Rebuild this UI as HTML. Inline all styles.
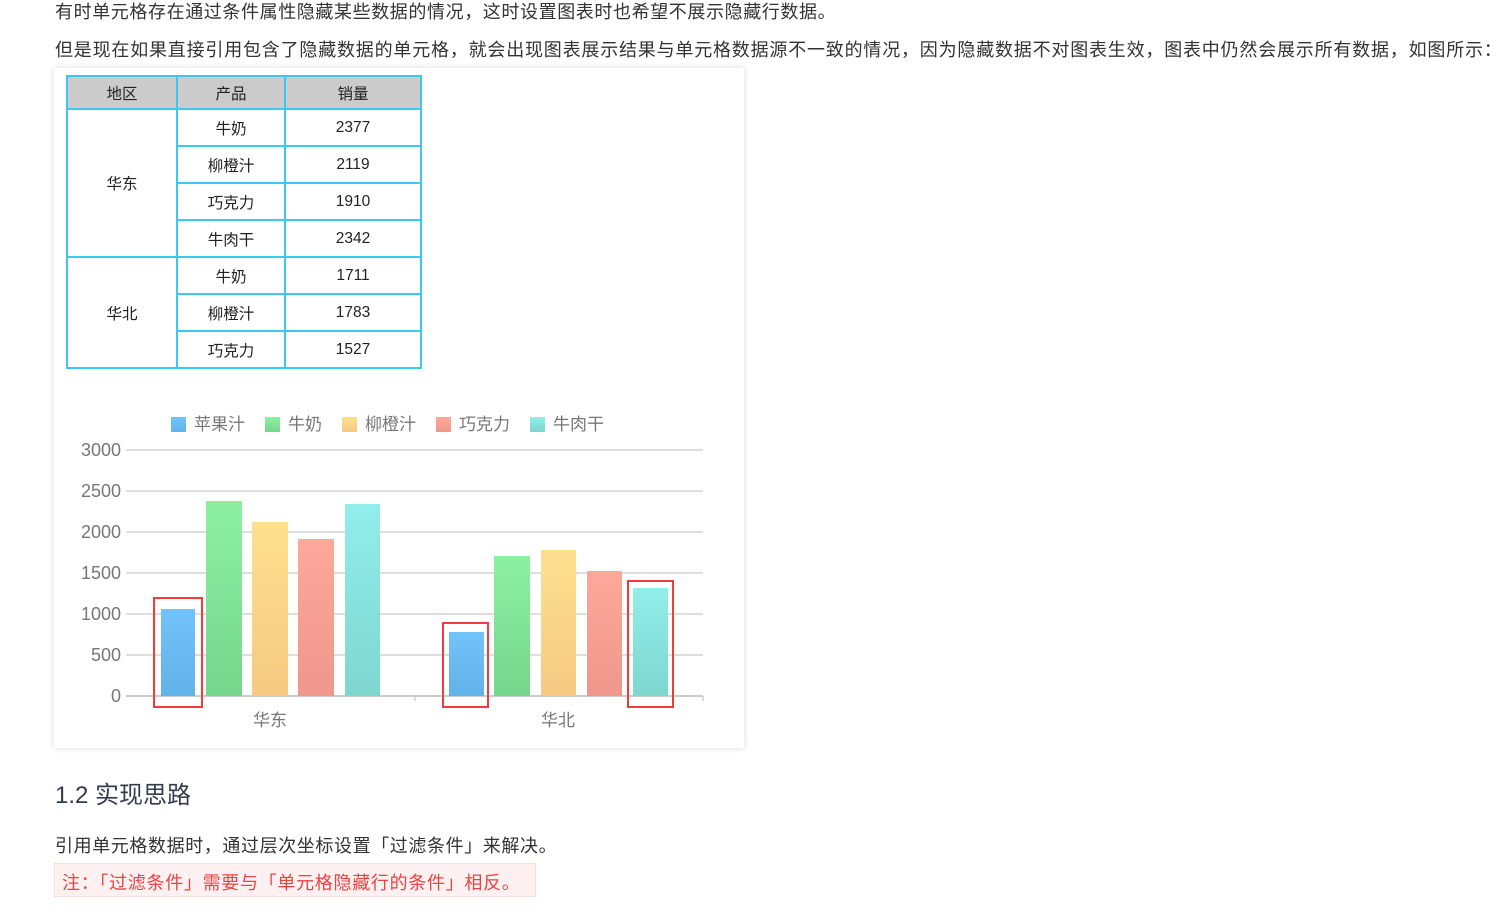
<!DOCTYPE html>
<html><head><meta charset="utf-8"><style>
body{margin:0;width:1512px;height:916px;background:#fff;font-family:"Liberation Sans","Noto Sans CJK SC",sans-serif;color:#333;position:relative;overflow:hidden}
.t{position:absolute;left:55px;font-size:18px;white-space:nowrap;color:#333}
.card{position:absolute;left:54px;top:68px;width:690px;height:680px;background:#fff;box-shadow:0 0 6px rgba(0,0,0,.15)}
table{position:absolute;left:12px;top:7px;border-collapse:collapse;font-size:15.5px;color:#222}
td,th{border:2px solid #3cc8f0;text-align:center;padding:0;font-weight:normal}
th{background:#cbcbcb;height:31px}
td{height:35px}
</style></head><body>
<div class="t" style="top:-2px;letter-spacing:0.6px">有时单元格存在通过条件属性隐藏某些数据的情况，这时设置图表时也希望不展示隐藏行数据。</div>
<div class="t" style="top:36px;letter-spacing:0.8px">但是现在如果直接引用包含了隐藏数据的单元格，就会出现图表展示结果与单元格数据源不一致的情况，因为隐藏数据不对图表生效，图表中仍然会展示所有数据，如图所示：</div>
<div class="card">
<table>
<tr><th style="width:108px">地区</th><th style="width:106px">产品</th><th style="width:134px">销量</th></tr>
<tr><td rowspan="4">华东</td><td>牛奶</td><td>2377</td></tr>
<tr><td>柳橙汁</td><td>2119</td></tr>
<tr><td>巧克力</td><td>1910</td></tr>
<tr><td>牛肉干</td><td>2342</td></tr>
<tr><td rowspan="3">华北</td><td>牛奶</td><td>1711</td></tr>
<tr><td>柳橙汁</td><td>1783</td></tr>
<tr><td>巧克力</td><td>1527</td></tr>
</table>
</div>
<svg style="position:absolute;left:0;top:0" width="1512" height="916" font-family="Liberation Sans, Noto Sans CJK SC, sans-serif">
<defs>
<linearGradient id="b" x1="0" y1="0" x2="0" y2="1"><stop offset="0" stop-color="#72c3fb"/><stop offset="1" stop-color="#62b2ea"/></linearGradient>
<linearGradient id="g" x1="0" y1="0" x2="0" y2="1"><stop offset="0" stop-color="#8cf0a2"/><stop offset="1" stop-color="#76d68c"/></linearGradient>
<linearGradient id="y" x1="0" y1="0" x2="0" y2="1"><stop offset="0" stop-color="#fde08f"/><stop offset="1" stop-color="#f6c982"/></linearGradient>
<linearGradient id="r" x1="0" y1="0" x2="0" y2="1"><stop offset="0" stop-color="#fca89a"/><stop offset="1" stop-color="#f0968b"/></linearGradient>
<linearGradient id="c" x1="0" y1="0" x2="0" y2="1"><stop offset="0" stop-color="#92eeea"/><stop offset="1" stop-color="#7ed6cf"/></linearGradient>
</defs>
<g font-size="17" fill="#777">
<rect x="171" y="417" width="15" height="15" fill="url(#b)"/><text x="194" y="430">苹果汁</text>
<rect x="265" y="417" width="15" height="15" fill="url(#g)"/><text x="288" y="430">牛奶</text>
<rect x="342" y="417" width="15" height="15" fill="url(#y)"/><text x="365" y="430">柳橙汁</text>
<rect x="436" y="417" width="15" height="15" fill="url(#r)"/><text x="459" y="430">巧克力</text>
<rect x="530" y="417" width="15" height="15" fill="url(#c)"/><text x="553" y="430">牛肉干</text>
</g>
<g stroke="#d4d4d4" stroke-width="1.5">
<line x1="126" y1="450" x2="703" y2="450"/><line x1="126" y1="491" x2="703" y2="491"/><line x1="126" y1="532" x2="703" y2="532"/><line x1="126" y1="573" x2="703" y2="573"/><line x1="126" y1="614" x2="703" y2="614"/><line x1="126" y1="655" x2="703" y2="655"/>
</g>
<line x1="126" y1="696" x2="703" y2="696" stroke="#bbb" stroke-width="1.5"/>
<line x1="415" y1="696" x2="415" y2="701" stroke="#bbb"/><line x1="703" y1="696" x2="703" y2="701" stroke="#bbb"/>
<g font-size="18" fill="#777" text-anchor="end">
<text x="121" y="456">3000</text><text x="121" y="497">2500</text><text x="121" y="538">2000</text><text x="121" y="579">1500</text><text x="121" y="620">1000</text><text x="121" y="661">500</text><text x="121" y="702">0</text>
</g>
<g font-size="17" fill="#777" text-anchor="middle"><text x="270" y="726">华东</text><text x="558" y="726">华北</text></g>
<rect x="161" y="609" width="34" height="87" fill="url(#b)"/>
<rect x="206" y="501" width="36" height="195" fill="url(#g)"/>
<rect x="252" y="522" width="36" height="174" fill="url(#y)"/>
<rect x="298" y="539" width="36" height="157" fill="url(#r)"/>
<rect x="345" y="504" width="35" height="192" fill="url(#c)"/>
<rect x="449" y="632" width="35" height="64" fill="url(#b)"/>
<rect x="494" y="556" width="36" height="140" fill="url(#g)"/>
<rect x="541" y="550" width="35" height="146" fill="url(#y)"/>
<rect x="587" y="571" width="35" height="125" fill="url(#r)"/>
<rect x="633" y="588" width="35" height="108" fill="url(#c)"/>
<g fill="none" stroke="#f03c3c" stroke-width="2">
<rect x="154" y="598" width="48" height="109"/>
<rect x="443" y="623" width="45" height="84"/>
<rect x="628" y="581" width="45" height="126"/>
</g>
</svg>
<div style="position:absolute;left:55px;top:775px;font-size:24px;color:#333d4d">1.2 实现思路</div>
<div class="t" style="top:832px;letter-spacing:0.6px">引用单元格数据时，通过层次坐标设置「过滤条件」来解决。</div>
<div style="position:absolute;left:54px;top:863px;width:480px;height:32px;background:#fff1f1;border:1px solid #fcdede"></div>
<div style="position:absolute;left:62px;top:869px;font-size:18px;color:#e84343;white-space:nowrap;letter-spacing:0.7px">注：「过滤条件」需要与「单元格隐藏行的条件」相反。</div>
</body></html>
